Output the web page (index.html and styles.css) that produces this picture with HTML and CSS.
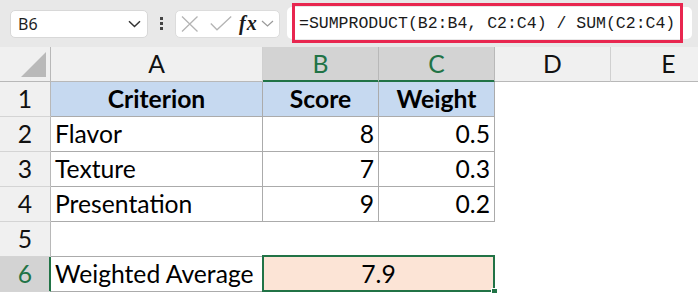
FILE: index.html
```html
<!DOCTYPE html>
<html>
<head>
<meta charset="utf-8">
<link rel="stylesheet" href="styles.css">
</head>
<body>
<div class="toolbar">
  <div class="namebox">
    <span class="namebox-text">B6</span>
    <svg class="namebox-chev" width="13" height="8" viewBox="0 0 13 8"><path d="M1 1.2 L6.5 6.5 L12 1.2" fill="none" stroke="#333" stroke-width="1.5"/></svg>
  </div>
  <div class="dots"><span></span><span></span><span></span></div>
  <div class="fxbox">
    <svg class="ic-x" width="18" height="16" viewBox="0 0 18 16"><path d="M1 0.5 L16.5 15.5 M16.5 0.5 L1 15.5" fill="none" stroke="#b4b4b4" stroke-width="1.3"/></svg>
    <svg class="ic-check" width="22" height="15" viewBox="0 0 22 15"><path d="M0.8 7.5 L7 13.8 L21.2 0.6" fill="none" stroke="#b4b4b4" stroke-width="1.3"/></svg>
    <span class="fx">fx</span>
    <svg class="ic-chev" width="13" height="7" viewBox="0 0 13 7"><path d="M1 1 L6.5 6 L12 1" fill="none" stroke="#9a9a9a" stroke-width="1.2"/></svg>
  </div>
  <div class="formula">
    <span class="formula-text">=SUMPRODUCT(B2:B4, C2:C4) / SUM(C2:C4)</span>
    <div class="highlight"></div>
  </div>
</div>

<div class="sheet">
  <div class="corner"><div class="tri"></div></div>
  <div class="colhdr">A</div>
  <div class="colhdr sel">B</div>
  <div class="colhdr sel">C</div>
  <div class="colhdr">D</div>
  <div class="colhdr">E</div>

  <div class="rowhdr">1</div>
  <div class="cell tb head">Criterion</div>
  <div class="cell tb head">Score</div>
  <div class="cell tb head">Weight</div>
  <div class="cell"></div>
  <div class="cell"></div>

  <div class="rowhdr">2</div>
  <div class="cell tb txt">Flavor</div>
  <div class="cell tb num">8</div>
  <div class="cell tb num">0.5</div>
  <div class="cell"></div>
  <div class="cell"></div>

  <div class="rowhdr">3</div>
  <div class="cell tb txt">Texture</div>
  <div class="cell tb num">7</div>
  <div class="cell tb num">0.3</div>
  <div class="cell"></div>
  <div class="cell"></div>

  <div class="rowhdr">4</div>
  <div class="cell tb txt">Presentation</div>
  <div class="cell tb num">9</div>
  <div class="cell tb num">0.2</div>
  <div class="cell"></div>
  <div class="cell"></div>

  <div class="rowhdr">5</div>
  <div class="cell bline"></div>
  <div class="cell"></div>
  <div class="cell"></div>
  <div class="cell"></div>
  <div class="cell"></div>

  <div class="rowhdr selrow">6</div>
  <div class="cell tb txt">Weighted Average</div>
  <div class="cell merged">7.9<div class="selection"><div class="handle"></div></div></div>
  <div class="cell"></div>
  <div class="cell"></div>
</div>
</body>
</html>
```
FILE: styles.css
```css
html, body {
  margin: 0;
  padding: 0;
}
body {
  width: 698px;
  height: 293px;
  overflow: hidden;
  background: #ffffff;
}

/* ---------- toolbar ---------- */
.toolbar {
  height: 47px;
  background: #e8e8e8;
  display: flex;
  align-items: center;
  padding-left: 10px;
  box-sizing: border-box;
}
.namebox {
  flex: none;
  width: 138px;
  height: 28px;
  box-sizing: border-box;
  background: #fff;
  border: 1px solid #d8d8d8;
  border-radius: 5px;
  display: flex;
  align-items: center;
  padding-left: 7px;
  padding-right: 6px;
}
.namebox-text {
  font: 16px "Noto Sans", sans-serif;
  color: #1f1f1f;
  flex: 1;
}
.namebox-chev { display: block; }

.dots {
  flex: none;
  margin-left: 12px;
  width: 3px;
  display: flex;
  flex-direction: column;
  gap: 2px;
}
.dots span {
  width: 3px;
  height: 3px;
  background: #444;
  display: block;
}

.fxbox {
  flex: none;
  margin-left: 12px;
  width: 105px;
  height: 28px;
  box-sizing: border-box;
  background: #fff;
  border: 1px solid #dcdcdc;
  border-radius: 5px;
  display: flex;
  align-items: center;
}
.ic-x { margin-left: 5px; display: block; }
.ic-check { margin-left: 11px; display: block; }
.fx {
  margin-left: 7px;
  font: italic 700 20px "Liberation Serif", serif;
  letter-spacing: 1px;
  color: #1a1a1a;
  line-height: 1;
  margin-top: -2px;
}
.ic-chev { margin-left: 3px; display: block; }

.formula {
  flex: none;
  position: relative;
  margin-left: 7px;
  width: 405px;
  height: 32px;
  box-sizing: border-box;
  background: #fff;
  border-radius: 5px;
  display: flex;
  align-items: center;
  padding-left: 12px;
  margin-top: -1px;
}
.formula-text {
  font: 16.5px "Liberation Mono", monospace;
  color: #1a1a1a;
  white-space: pre;
}
.highlight {
  position: absolute;
  left: 5px;
  top: -4px;
  width: 391px;
  height: 40px;
  box-sizing: border-box;
  border: 3px solid #e8264f;
}

/* ---------- sheet ---------- */
.sheet {
  display: grid;
  grid-template-columns: 51px 212px 116px 116px 116px 116px;
  grid-template-rows: repeat(7, 35px);
  font: 24.7px "Lato", sans-serif;
  color: #000;
}
.sheet > div {
  box-sizing: border-box;
  border-right: 1px solid transparent;
  border-bottom: 1px solid transparent;
  line-height: 34px;
  white-space: nowrap;
}
.corner {
  background: #f0f0f0;
  position: relative;
  border-right-color: #b8b8b8 !important;
  border-bottom-color: #b8b8b8 !important;
}
.tri {
  position: absolute;
  right: 4px;
  bottom: 4px;
  width: 0;
  height: 0;
  border-left: 25px solid transparent;
  border-bottom: 25px solid #b9b9b9;
}
.colhdr {
  background: #f0f0f0;
  text-align: center;
  color: #111;
  border-right-color: #d0d0d0 !important;
  border-bottom-color: #b8b8b8 !important;
}
.colhdr.sel {
  background: #d3d3d3;
  color: #217346;
  border-right-color: #b8b8b8 !important;
  border-bottom-color: #217346 !important;
  box-shadow: inset 0 -1px 0 #217346;
}
.rowhdr {
  background: #f0f0f0;
  text-align: center;
  color: #111;
  border-right-color: #b8b8b8 !important;
  border-bottom-color: #d4d4d4 !important;
}
.rowhdr.selrow {
  background: #d3d3d3;
  color: #217346;
  border-right-color: #217346 !important;
  box-shadow: inset -1px 0 0 #217346;
}
.cell.tb {
  border-right-color: #ababab;
  border-bottom-color: #ababab;
}
.cell.bline { border-bottom-color: #ababab; }
.cell.head {
  background: #c6d9f0;
  font-weight: 700;
  text-align: center;
}
.cell.txt { padding-left: 4px; }
.cell.num {
  text-align: right;
  padding-right: 4px;
}
.cell.merged {
  grid-column: span 2;
  background: #fce4d6;
  text-align: center;
  position: relative;
  border-bottom-color: #ababab;
}
.selection {
  position: absolute;
  left: -1px;
  right: -1px;
  top: -2px;
  bottom: -1px;
  border: 2px solid #217346;
}
.handle {
  position: absolute;
  right: -5px;
  bottom: -5px;
  width: 5px;
  height: 5px;
  background: #217346;
  border: 1px solid #fff;
}
```
